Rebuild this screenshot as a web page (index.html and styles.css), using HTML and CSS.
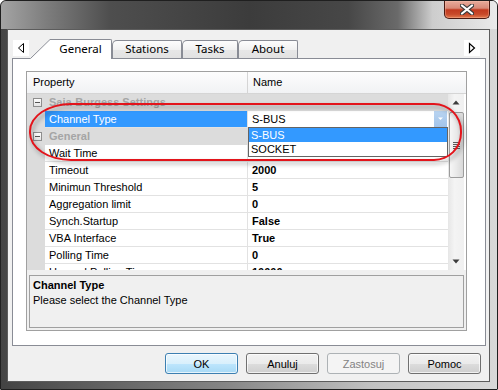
FILE: index.html
```html
<!DOCTYPE html>
<html lang="pl">
<head>
    <meta charset="UTF-8">
    <title>Properties</title>
    <link rel="stylesheet" href="styles.css">
</head>
<body>
    <div class="window">
        <div class="titlebar">
            <div class="close-btn">
                <svg width="14" height="11" viewBox="0 0 14 11">
                    <path d="M2 1.5 L12 9.5 M12 1.5 L2 9.5" stroke="#3b3b3b" stroke-width="4.2" stroke-linecap="round"/>
                    <path d="M2 1.5 L12 9.5 M12 1.5 L2 9.5" stroke="#ffffff" stroke-width="2.2" stroke-linecap="round"/>
                </svg>
            </div>
        </div>

        <div class="frame">
            <div class="client">
                <div class="tabstrip">
                    <div class="tab-scroll left">
                        <svg width="16" height="16" viewBox="0 0 16 16">
                            <path d="M10.5 3.5 L10.5 12.5 L5.5 8 Z" fill="none" stroke="#000" stroke-width="1"/>
                        </svg>
                    </div>
                    <svg class="tab-slant" width="20" height="20" viewBox="0 0 20 20">
                        <polygon points="0,20 20,0 20,20" fill="#fff"/>
                        <line x1="0.5" y1="19.5" x2="20" y2="0.5" stroke="#898c95" stroke-width="1"/>
                    </svg>
                    <div class="tab active">General</div>
                    <div class="tab tab-stations">Stations</div>
                    <div class="tab tab-tasks">Tasks</div>
                    <div class="tab tab-about">About</div>
                    <div class="tab-scroll right">
                        <svg width="16" height="16" viewBox="0 0 16 16">
                            <path d="M5.5 3.5 L5.5 12.5 L10.5 8 Z" fill="none" stroke="#000" stroke-width="1.2"/>
                        </svg>
                    </div>
                </div>

                <div class="tabpage">
                    <div class="propgrid">
                        <div class="grid-head">
                            <div class="head-cell head-name">Property</div>
                            <div class="head-cell head-value">Name</div>
                        </div>

                        <div class="grid-body">
                            <div class="rows">
                                <div class="row cat">
                                    <div class="gut"><span class="expander"></span></div>
                                    <div class="cat-label">Saia-Burgess Settings</div>
                                </div>
                                <div class="row sel">
                                    <div class="gut"></div>
                                    <div class="pname">Channel Type</div>
                                    <div class="pval">
                                        <span>S-BUS</span>
                                        <span class="drop-btn">
                                            <svg width="13" height="15" viewBox="0 0 13 15">
                                                <path d="M4 6.5 L9 6.5 L6.5 9 Z" fill="#fff"/>
                                            </svg>
                                        </span>
                                    </div>
                                </div>
                                <div class="row cat">
                                    <div class="gut"><span class="expander"></span></div>
                                    <div class="cat-label">General</div>
                                </div>
                                <div class="row">
                                    <div class="gut"></div>
                                    <div class="pname">Wait Time</div>
                                    <div class="pval">0</div>
                                </div>
                                <div class="row">
                                    <div class="gut"></div>
                                    <div class="pname">Timeout</div>
                                    <div class="pval">2000</div>
                                </div>
                                <div class="row">
                                    <div class="gut"></div>
                                    <div class="pname">Minimun Threshold</div>
                                    <div class="pval">5</div>
                                </div>
                                <div class="row">
                                    <div class="gut"></div>
                                    <div class="pname">Aggregation limit</div>
                                    <div class="pval">0</div>
                                </div>
                                <div class="row">
                                    <div class="gut"></div>
                                    <div class="pname">Synch.Startup</div>
                                    <div class="pval">False</div>
                                </div>
                                <div class="row">
                                    <div class="gut"></div>
                                    <div class="pname">VBA Interface</div>
                                    <div class="pval">True</div>
                                </div>
                                <div class="row">
                                    <div class="gut"></div>
                                    <div class="pname">Polling Time</div>
                                    <div class="pval">0</div>
                                </div>
                                <div class="row">
                                    <div class="gut"></div>
                                    <div class="pname">Unused Polling Time</div>
                                    <div class="pval">10000</div>
                                </div>

                                <div class="droplist">
                                    <div class="drop-item selected">S-BUS</div>
                                    <div class="drop-item">SOCKET</div>
                                </div>
                            </div>

                            <div class="vscroll">
                                <div class="vs-arrow">
                                    <svg width="16" height="17" viewBox="0 0 16 17">
                                        <path d="M4.5 10.5 L11.5 10.5 L8 6.5 Z" fill="#3c3c3c"/>
                                    </svg>
                                </div>
                                <div class="vs-thumb">
                                    <span class="grip"></span>
                                </div>
                                <div class="vs-track"></div>
                                <div class="vs-arrow">
                                    <svg width="16" height="17" viewBox="0 0 16 17">
                                        <path d="M4.5 6.5 L11.5 6.5 L8 10.5 Z" fill="#3c3c3c"/>
                                    </svg>
                                </div>
                            </div>
                            <div class="vscroll-gap"></div>
                        </div>

                        <div class="doc">
                            <div class="doc-title">Channel Type</div>
                            <div>Please select the Channel Type</div>
                        </div>
                    </div>
                </div>

                <div class="buttons">
                    <button class="btn default">OK</button>
                    <button class="btn">Anuluj</button>
                    <button class="btn disabled">Zastosuj</button>
                    <button class="btn">Pomoc</button>
                </div>
            </div>
        </div>

        <!-- red annotation round the edited property -->
        <div class="annotation"></div>
    </div>
</body>
</html>
```

FILE: styles.css
```css
body {
    margin: 0;
    font-family: "Liberation Sans", Arial, sans-serif;
    font-size: 11px;
    color: #000;
    background: #fff;
}
.window {
    position: relative;
    width: 498px;
    height: 390px;
    box-sizing: border-box;
    border: 1px solid #1f1f1f;
    border-radius: 6px 6px 1px 1px;
    display: flex;
    flex-direction: column;
    overflow: hidden;
    background: linear-gradient(to right, #434343 0%, #555 12%, #858585 45%, #c2c2c2 75%, #d8d8d8 100%);
}
.titlebar {
    height: 28px;
    flex: none;
    display: flex;
    justify-content: flex-end;
    align-items: flex-start;
    padding-right: 7px;
    background: linear-gradient(to right, #a4a4a4 0%, #7e7e7e 9%, #4e4e4e 22%, #3c3c3c 50%, #474747 70%, #6a6a6a 80%, #cdcdcd 87%, #eaeaea 100%);
}
.close-btn {
    width: 46px;
    height: 18px;
    box-sizing: border-box;
    border: 1px solid #4a1a12;
    border-top: none;
    border-radius: 0 0 5px 5px;
    display: flex;
    align-items: center;
    justify-content: center;
    background: linear-gradient(to bottom, #e8ab9b 0%, #d88a78 42%, #c23a1f 52%, #c84a2a 78%, #e27a4e 100%);
    box-shadow: inset 0 0 0 1px rgba(255, 200, 180, 0.35);
}
.frame {
    flex: 1;
    display: flex;
    padding: 0 7px 7px 6px;
}
.client {
    flex: 1;
    border: 1px solid #5c5c5c;
    background: #f0f0f0;
    padding: 9px 3px 7px 4px;
    display: flex;
    flex-direction: column;
}

/* tabs */
.tabstrip {
    height: 19px;
    flex: none;
    display: flex;
    align-items: flex-end;
    position: relative;
    z-index: 1;
    font-family: "Noto Sans", "Open Sans", sans-serif;
    font-size: 11.5px;
}
.tab-scroll {
    align-self: flex-start;
    margin-top: 1px;
    width: 16px;
    height: 16px;
    background: #fff;
    flex: none;
}
.tab-scroll svg {
    display: block;
}
.tab-scroll.left {
    margin-left: 1px;
}
.tab-scroll.right {
    margin-left: auto;
    margin-right: 6px;
}
.tab-slant {
    display: block;
    flex: none;
    margin-left: 1px;
    margin-bottom: -1px;
}
.tab {
    height: 18px;
    box-sizing: border-box;
    flex: none;
    border: 1px solid #898c95;
    border-bottom: none;
    border-radius: 5px 2px 0 0;
    background: linear-gradient(to bottom, #fdfdfd 0%, #f1f1f1 50%, #e7e7e7 51%, #e2e2e2 100%);
    line-height: 16px;
    text-align: center;
}
.tab.active {
    width: 62px;
    height: 20px;
    margin-bottom: -1px;
    border-left: none;
    border-radius: 0 2px 0 0;
    background: #fff;
    line-height: 18px;
}
.tab-stations {
    width: 70px;
}
.tab-tasks {
    width: 56px;
}
.tab-about {
    width: 60px;
}
.tabpage {
    height: 288px;
    flex: none;
    box-sizing: border-box;
    border: 1px solid #898c95;
    background: #fff;
    padding: 12px 18px 14px 13px;
}

/* property grid */
.propgrid {
    height: 260px;
    box-sizing: border-box;
    border: 1px solid #a0a0a0;
    background: #f0f0f0;
    display: flex;
    flex-direction: column;
}
.grid-head {
    height: 22px;
    flex: none;
    box-sizing: border-box;
    display: flex;
    border-bottom: 1px solid #d5d5d5;
    background: linear-gradient(to bottom, #fdfdfd, #f1f2f4);
    line-height: 21px;
}
.head-name {
    width: 221px;
    box-sizing: border-box;
    padding-left: 6px;
    border-right: 1px solid #d5d5d5;
}
.head-value {
    padding-left: 5px;
}
.grid-body {
    height: 176px;
    flex: none;
    display: flex;
}
.rows {
    width: 421px;
    position: relative;
    overflow: hidden;
    background: #fff;
}
.row {
    display: flex;
    height: 17px;
}
.gut {
    width: 18px;
    flex: none;
    background: #dcdcdc;
}
.expander {
    display: block;
    position: relative;
    width: 9px;
    height: 9px;
    box-sizing: border-box;
    margin: 4px 0 0 6px;
    border: 1px solid #8e8e8e;
    background: linear-gradient(to bottom, #fdfdfd, #e4e4e4);
}
.expander::after {
    content: "";
    position: absolute;
    left: 1px;
    top: 3px;
    width: 5px;
    height: 1px;
    background: #555;
}
.cat-label {
    width: 403px;
    background: #dcdcdc;
    padding-left: 4px;
    font-weight: bold;
    color: #a5a5a5;
    line-height: 16px;
}
.pname {
    width: 203px;
    flex: none;
    box-sizing: border-box;
    padding-left: 4px;
    border-right: 1px solid #e2e2e2;
    border-bottom: 1px solid #e2e2e2;
    line-height: 16px;
    white-space: nowrap;
    overflow: hidden;
}
.pval {
    width: 200px;
    flex: none;
    box-sizing: border-box;
    padding-left: 4px;
    border-bottom: 1px solid #e2e2e2;
    font-weight: bold;
    line-height: 16px;
}
.row.sel .pname {
    background: #3399ff;
    color: #fff;
}
.row.sel .pval {
    font-weight: normal;
    display: flex;
    justify-content: space-between;
    padding-right: 1px;
}
.drop-btn {
    width: 13px;
    height: 16px;
    background: linear-gradient(to bottom, #b9d4f1, #a2c4ea);
}
.drop-btn svg {
    display: block;
}
.droplist {
    position: absolute;
    left: 221px;
    top: 33px;
    width: 200px;
    height: 30px;
    box-sizing: border-box;
    border: 1px solid #646464;
    background: #fff;
}
.drop-item {
    height: 14px;
    line-height: 14px;
    padding-left: 2px;
}
.drop-item.selected {
    background: #3399ff;
    color: #fff;
}

/* scrollbar */
.vscroll {
    width: 16px;
    flex: none;
    display: flex;
    flex-direction: column;
    background: linear-gradient(to right, #e6e6e6, #f4f4f4 40%, #f0f0f0);
}
.vs-arrow {
    height: 17px;
    flex: none;
}
.vs-arrow svg {
    display: block;
}
.vs-thumb {
    height: 66px;
    flex: none;
    margin: 1px 0 0 1px;
    box-sizing: border-box;
    border: 1px solid #9c9c9c;
    border-radius: 2px;
    background: linear-gradient(to right, #f6f6f6, #e9e9e9 50%, #d9d9d9);
    display: flex;
    align-items: center;
    justify-content: center;
}
.grip {
    width: 7px;
    height: 7px;
    background: repeating-linear-gradient(to bottom, #5a5a5a 0 1px, transparent 1px 2px);
}
.vs-track {
    flex: 1;
}
.vscroll-gap {
    width: 2px;
    background: #fff;
}

.doc {
    height: 53px;
    flex: none;
    box-sizing: border-box;
    margin: 5px 2px 0 2px;
    border: 1px solid #a0a0a0;
    padding: 2px 3px;
    line-height: 15px;
}
.doc-title {
    font-weight: bold;
}

/* dialog buttons */
.buttons {
    display: flex;
    justify-content: flex-end;
    gap: 8px;
    margin-top: 7px;
    padding-right: 5px;
}
.btn {
    width: 73px;
    height: 21px;
    box-sizing: border-box;
    border: 1px solid #707070;
    border-radius: 3px;
    padding: 0;
    font-family: "Liberation Sans", Arial, sans-serif;
    font-size: 11px;
    color: #000;
    background: linear-gradient(to bottom, #f2f2f2 0%, #ebebeb 50%, #dddddd 51%, #cfcfcf 100%);
    box-shadow: inset 0 0 0 1px rgba(255, 255, 255, 0.7);
}
.btn.default {
    border-color: #3c7fb1;
    background: linear-gradient(to bottom, #eaf6fd 0%, #d9f0fc 50%, #bee6fd 51%, #a7d9f5 100%);
}
.btn.disabled {
    border-color: #adb2b5;
    background: #f4f4f4;
    color: #838383;
    box-shadow: none;
}

.annotation {
    position: absolute;
    left: 28px;
    top: 102px;
    width: 433px;
    height: 58px;
    box-sizing: border-box;
    border: 2px solid #e3141b;
    border-radius: 42px 28px 28px 42px / 28px;
    filter: drop-shadow(2px 3px 2px rgba(0, 0, 0, 0.35));
}
```
